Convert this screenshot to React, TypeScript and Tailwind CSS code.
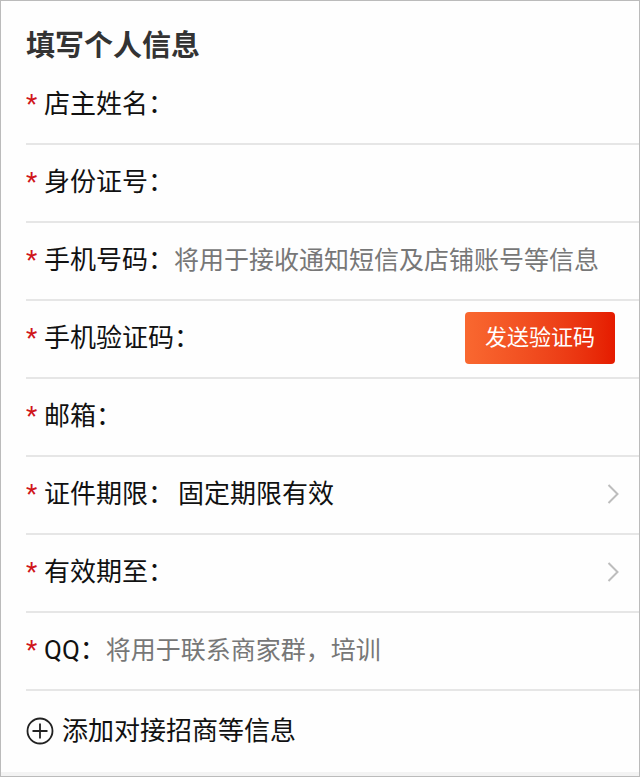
import { useState } from "react";
import type { ReactNode } from "react";

function Mark() {
  return (
    <span className="w-[18px] shrink-0 text-[#d0161b]" aria-hidden="true">
      *
    </span>
  );
}

function Chevron() {
  return (
    <svg
      className="pointer-events-none h-5 w-3 shrink-0"
      viewBox="0 0 12 20"
      fill="none"
      stroke="#bdbdbd"
      strokeWidth="2"
      aria-hidden="true"
    >
      <path d="M1.5 1L10.5 10L1.5 19" />
    </svg>
  );
}

function Row({
  id,
  label,
  children,
}: {
  id: string;
  label: string;
  children: ReactNode;
}) {
  return (
    <div className="ml-[25px] flex h-[78px] items-center border-b-2 border-[#e6e6e6] pb-0.5">
      <label htmlFor={id} className="flex shrink-0 items-center">
        <Mark />
        {label}
      </label>
      {children}
    </div>
  );
}

function TextField({
  id,
  label,
  type = "text",
  placeholder,
}: {
  id: string;
  label: string;
  type?: string;
  placeholder?: string;
}) {
  return (
    <Row id={id} label={label}>
      <input
        id={id}
        name={id}
        type={type}
        placeholder={placeholder}
        className="h-12 w-full min-w-0 flex-1 bg-transparent text-[25px] outline-none placeholder:text-[#777777]"
      />
    </Row>
  );
}

export default function App() {
  const [term, setTerm] = useState("fixed");
  const [until, setUntil] = useState("");

  return (
    <form
      className="flex min-h-screen flex-col border border-[#bbbbbb] bg-[#fefefe] font-['Roboto','Noto_Sans_CJK_SC',sans-serif] text-[26px] leading-9 text-[#111111]"
      onSubmit={(e) => e.preventDefault()}
    >
      <h1 className="px-[25px] pt-[25px] pb-px text-[29px] leading-[40px] font-bold text-[#333333]">
        填写个人信息
      </h1>

      <TextField id="name" label="店主姓名：" />
      <TextField id="idNumber" label="身份证号：" />
      <TextField
        id="phone"
        label="手机号码："
        type="tel"
        placeholder="将用于接收通知短信及店铺账号等信息"
      />
      <Row id="code" label="手机验证码：">
        <input
          id="code"
          name="code"
          className="h-12 w-full min-w-0 flex-1 bg-transparent text-[25px] outline-none"
        />
        <button
          type="button"
          className="mr-6 h-[52px] w-[150px] shrink-0 rounded bg-linear-to-r from-[#f96830] to-[#e51a00] text-[22px] text-white"
        >
          发送验证码
        </button>
      </Row>
      <TextField id="email" label="邮箱：" type="email" />
      <Row id="term" label="证件期限：">
        <select
          id="term"
          value={term}
          onChange={(e) => setTerm(e.target.value)}
          className="h-12 min-w-0 flex-1 appearance-none bg-transparent pl-1 outline-none"
        >
          <option value="fixed">固定期限有效</option>
          <option value="long">长期有效</option>
        </select>
        <div className="mr-5 flex">
          <Chevron />
        </div>
      </Row>
      <Row id="until" label="有效期至：">
        <select
          id="until"
          value={until}
          onChange={(e) => setUntil(e.target.value)}
          className="h-12 min-w-0 flex-1 appearance-none bg-transparent pl-1 outline-none"
        >
          <option value=""></option>
          <option value="2030">2030</option>
        </select>
        <div className="mr-5 flex">
          <Chevron />
        </div>
      </Row>
      <TextField id="qq" label="QQ：" placeholder="将用于联系商家群，培训" />

      <button
        type="button"
        className="ml-[25px] flex h-20 items-center gap-2 self-start"
      >
        <svg
          className="h-7 w-7"
          viewBox="0 0 28 28"
          fill="none"
          stroke="#222222"
          strokeWidth="1.8"
          aria-hidden="true"
        >
          <circle cx="14" cy="14" r="12.5" />
          <path d="M14 6.5V21.5M6.5 14H21.5" />
        </svg>
        添加对接招商等信息
      </button>
      <div className="mt-auto h-1 bg-[#f3f3f3]" />
    </form>
  );
}
